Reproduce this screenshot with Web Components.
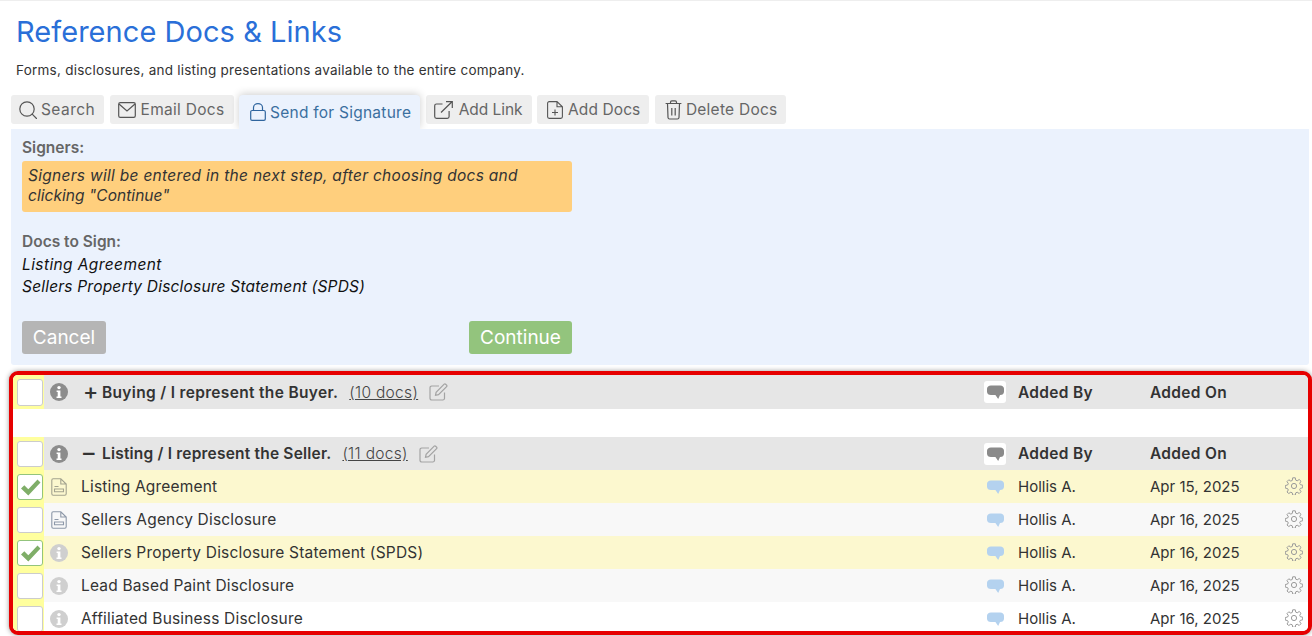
<!DOCTYPE html>
<html><head><meta charset="utf-8"><style>
html,body{margin:0;padding:0;background:#fff;height:636px;overflow:hidden}
body{font-family:Inter,"Open Sans",sans-serif;color:#333;border-top:1px solid #eee;box-sizing:border-box}
</style></head><body>
<doc-page></doc-page>
<script>
const ICONS={
search:'<svg width="18" height="18" viewBox="0 0 18 18" fill="none" stroke="currentColor" stroke-width="1.2"><circle cx="8" cy="8" r="7.2"/><path d="M13.200 13.200l4.300 4.300" stroke-linecap="round"/></svg>',
mail:'<svg width="18" height="16" viewBox="0 0 18 16" fill="none" stroke="currentColor" stroke-width="1.2"><rect x=".7" y=".7" width="16.600" height="14.600" rx="1.600"/><path d="M1 2l8 7 8-7"/></svg>',
lock:'<svg width="16" height="18" viewBox="0 0 16 18" fill="none" stroke="currentColor" stroke-width="1.2"><rect x=".7" y="7.500" width="14.600" height="9.800" rx="1.400"/><path d="M3.500 7.500V4.500a4.500 3.800 0 0 1 9 0v3"/></svg>',
link:'<svg width="19" height="18" viewBox="0 0 19 18" fill="none" stroke="currentColor" stroke-width="1.2"><path d="M8.500 3H2.500A1.800 1.800 0 0 0 .7 4.800v10.700a1.800 1.800 0 0 0 1.800 1.800h10.800a1.800 1.800 0 0 0 1.800-1.800V10"/><path d="M7 11.500L18 .8M12 .7h6.300V7"/></svg>',
add:'<svg width="16" height="18" viewBox="0 0 16 18" fill="none" stroke="currentColor" stroke-width="1.100"><path d="M10 .6H2.200A1.600 1.600 0 0 0 .6 2.200v13.600a1.600 1.600 0 0 0 1.600 1.600h11.600a1.600 1.600 0 0 0 1.600-1.600V5.800zM10 .6v5.200h5.400"/><path d="M8 8.500v6M5 11.500h6"/></svg>',
trash:'<svg width="17" height="20" viewBox="0 0 17 20" fill="none" stroke="currentColor" stroke-width="1.200"><path d="M.6 3.500h15.800M2.500 3.500l.5 14a1.600 1.600 0 0 0 1.600 1.500h7.800a1.600 1.600 0 0 0 1.600-1.500l.5-14M5.500 3.500V2.200A1.400 1.400 0 0 1 6.900.8h3.200a1.400 1.400 0 0 1 1.400 1.400v1.300M6.800 8v7.500M10.200 8v7.500"/></svg>',
info:c=>`<svg width="18" height="18" viewBox="0 0 18 18"><circle cx="9" cy="9" r="9" fill="${c}"/><circle cx="9" cy="4.600" r="1.700" fill="#fff"/><path d="M6.600 7.400h3.800v6h1.100v1.600h-5v-1.600h1.200V9H6.600z" fill="#fff"/></svg>`,
edit:'<svg width="19" height="18" viewBox="0 0 19 18" fill="none" stroke="#a3a3a3" stroke-width="1.200"><path d="M15.500 9.500v6A1.700 1.700 0 0 1 13.800 17H2.700A1.700 1.700 0 0 1 1 15.300V4.700A1.700 1.700 0 0 1 2.700 3h7.300"/><path d="M6.500 12.300l.6-3L15.200 1.200a1 1 0 0 1 1.400 0l1 1a1 1 0 0 1 0 1.400L9.500 11.700z"/></svg>',
bubble:c=>`<svg width="17" height="15" viewBox="0 0 17 15"><path d="M4 .5h9.200C15.500.5 17 1.800 17 3.800v2.900c0 2-1.500 3.300-3.800 3.300H13l-1.800 3.900L8.400 10H4C1.600 10 0 8.700 0 6.700V3.800C0 1.800 1.600.5 4 .5z" fill="${c}"/></svg>`,
doc:c=>`<svg width="16" height="18" viewBox="0 0 16 18" fill="none" stroke="${c}" stroke-width="1.100"><path d="M9.800 .8H2.200A1.500 1.500 0 0 0 .8 2.300v13.400a1.500 1.500 0 0 0 1.400 1.500h11.600a1.500 1.500 0 0 0 1.400-1.500V6zM9.800 .8V6h5"/><path d="M3.500 8.500h4M3.500 11h9v2.700h-9z"/></svg>`,
gear:'<svg width="18" height="18" viewBox="0 0 18 18" fill="none" stroke="#9a9a9a" stroke-width="1"><circle cx="9" cy="9" r="2.600"/><path d="M7.700 .8h2.600l.4 2.300 1.500.7 2-1.300 1.800 1.800-1.300 2 .7 1.400 2.300.5v2.600l-2.300.5-.7 1.400 1.300 2-1.800 1.800-2-1.300-1.500.7-.4 2.300H7.700l-.4-2.300-1.500-.7-2 1.300L2 15l1.300-2-.7-1.400-2.300-.5V8.500l2.300-.5.7-1.400L2 4.600l1.800-1.800 2 1.300 1.500-.7z" stroke-linejoin="round"/></svg>'
};
function def(name,css,html){
  customElements.define(name,class extends HTMLElement{
    connectedCallback(){
      if(this.shadowRoot)return;
      const s=this.attachShadow({mode:'open'});
      s.innerHTML=`<style>${css}</style>`+(typeof html==='function'?html(this):html);
    }
  });
}
const attr=(e,n,d='')=>e.getAttribute(n)??d;

def('page-head',`:host{display:block;padding:0 0 0 16px}
h1{margin:0;padding-top:12px;height:37px;font:400 29px/37px Inter,sans-serif;color:#2a6fd8;letter-spacing:.05px}
p{margin:0;padding-top:10px;height:20px;font:400 13.5px/20px Inter,sans-serif;color:#333;letter-spacing:.24px}`,
`<h1>Reference Docs &amp; Links</h1><p>Forms, disclosures, and listing presentations available to the entire company.</p>`);

def('tool-tab',`:host{display:inline-flex;align-items:center;gap:var(--g,4px);height:29px;padding:0 9px 0 var(--p,8px);background:#eee;color:#666;border-radius:3px;font:400 15.5px/29px Inter,sans-serif;letter-spacing:var(--ls,.43px);box-sizing:border-box}
:host([active]){height:34px;background:#ebf2fd;color:#3b6f9f;border-radius:4px 4px 0 0;box-shadow:0 -1px 8px rgba(0,0,0,.2);position:relative;z-index:1;clip-path:inset(-10px -10px 0 -10px)}
.i{display:flex;color:#555}:host([active]) .i{color:#2f659e}`,
e=>`<span class="i">${ICONS[attr(e,'icon')]}</span><slot></slot>`);

def('tab-bar',`:host{display:flex;align-items:flex-start;gap:5.500px;padding-left:11px;height:34px;margin-top:15px}`,`<slot></slot>`);

def('sign-panel',`:host{display:block;margin:0 3px 0 11px;height:236px;background:#ebf2fd;box-sizing:border-box;padding:8px 10px 0 11px;border-radius:0 0 3px 3px;font:400 15.5px/22px Inter,sans-serif}
.l{font-weight:600;color:#666;line-height:22px}
.note{width:550px;height:51px;box-sizing:border-box;margin-top:2px;padding:5px 6px 0;background:#ffcf7d;border-radius:3px;font-style:italic;line-height:20px;color:#333;letter-spacing:.29px}
.d{margin-top:19px}
.doc{font-style:italic;color:#111;letter-spacing:.2px}
.doc.a{margin-top:1px;letter-spacing:.4px}
.btns{width:550px;display:flex;justify-content:space-between;margin-top:23px}
.b{height:33px;border-radius:3px;color:#fff;font:400 19px/33px Inter,sans-serif;text-align:center}
.c{width:84px;background:#b5b5b5}.g{width:103px;background:#93c47d}`,
`<div class="l">Signers:</div><div class="note">Signers will be entered in the next step, after choosing docs and<br><span style="letter-spacing:.05px">clicking "Continue"</span></div>
<div class="l d">Docs to Sign:</div><div class="doc a">Listing Agreement</div><div class="doc">Sellers Property Disclosure Statement (SPDS)</div>
<div class="btns"><div class="b c">Cancel</div><div class="b g">Continue</div></div>`);

const cols=`.by{position:absolute;left:1005px}.on{position:absolute;left:1137px}`;

def('group-head',`:host{display:flex;align-items:center;position:relative;height:33px;background:#e6e6e6;font:600 15.5px/33px Inter,sans-serif;color:#333;letter-spacing:.3px}
:host([tall]){height:34px}
.ck{width:31px;align-self:stretch;background:#ffff9e;display:flex;align-items:center;padding-left:4px;box-sizing:border-box;flex:none}
.box{width:26px;height:26px;background:#fff;border:1px solid #ccc;border-radius:3px;box-sizing:border-box;margin-top:1px}
:host([tall]) .box{height:27px}
.info{display:flex;margin-left:6px;width:18px}
.sign{width:19px;margin-left:15px;font-size:23px;font-weight:500;letter-spacing:0}
.c{margin-left:11px;font-weight:300;color:#444;text-decoration:underline;letter-spacing:.32px}
.e{display:flex;margin-left:11px}
.bb{position:absolute;left:971px;top:6px;width:22px;height:22px;background:#fff;border-radius:3px;display:flex;align-items:center;justify-content:center}
${cols}`,
e=>`<div class="ck"><div class="box"></div></div><span class="info">${ICONS.info('#8c8c8c')}</span><span class="sign">${attr(e,'sign')}</span><span style="letter-spacing:${attr(e,'ls','.3px')}">${attr(e,'label')}</span><span class="c">(${attr(e,'count')} docs)</span><span class="e">${ICONS.edit}</span>
<span class="bb">${ICONS.bubble('#8a8a8a')}</span><span class="by">Added By</span><span class="on">Added On</span>`);

def('doc-row',`:host{display:flex;align-items:center;position:relative;height:33px;background:#fff;font:400 15.5px/33px Inter,sans-serif;color:#333;letter-spacing:.18px;flex:none}
:host([alt]){background:#f8f8f8}:host([sel]){background:#fcf8cf}
.ck{width:31px;align-self:stretch;background:#ffff9e;display:flex;align-items:center;padding-left:4px;box-sizing:border-box;flex:none}
.box{width:26px;height:26px;background:#fff;border:1px solid #ccc;border-radius:3px;box-sizing:border-box;display:flex;align-items:center;justify-content:center;margin-top:1px}
:host([sel]) .box{border-color:#93c47d}
.info{display:flex;width:18px;margin-left:6px;justify-content:center}
.t{margin-left:13px}
.bb{position:absolute;left:974px;top:10px;display:flex}
.g{position:absolute;left:1272px;top:7px;display:flex}
.by,.on{font-size:15px;letter-spacing:0}
${cols}`,
e=>`<div class="ck"><div class="box">${e.hasAttribute('sel')?'<svg width="21" height="19" viewBox="0 0 21 19"><path d="M1 10.500l3.300-3.300 4 4L17.500 1.500 20.500 4.500 8.300 17.500z" fill="#7fae68"/></svg>':''}</div></div>
<span class="info">${attr(e,'kind')==='doc'?ICONS.doc(e.hasAttribute('sel')?'#a3a38f':'#8d98a8'):ICONS.info('#cfcfcf')}</span><span class="t"><slot></slot></span>
<span class="bb">${ICONS.bubble('#b4d2ef')}</span><span class="by">Hollis A.</span><span class="on">${attr(e,'date')}</span><span class="g">${ICONS.gear}</span>`);

def('doc-table',`:host{display:block;margin:6px 0 0 9px;height:264px;box-sizing:border-box;border:4px solid #e60000;border-radius:9px;overflow:hidden;background:#fff;box-shadow:0 0 5px rgba(0,0,0,.4)}
.gap{height:28px}`,
`<group-head sign="+" label="Buying / I represent the Buyer." ls=".33px" count="10" tall></group-head><div class="gap"></div>
<group-head sign="–" label="Listing / I represent the Seller." ls=".2px" count="11"></group-head>
<doc-row sel kind="doc" date="Apr 15, 2025">Listing Agreement</doc-row>
<doc-row alt kind="doc" date="Apr 16, 2025">Sellers Agency Disclosure</doc-row>
<doc-row sel date="Apr 16, 2025">Sellers Property Disclosure Statement (SPDS)</doc-row>
<doc-row alt date="Apr 16, 2025">Lead Based Paint Disclosure</doc-row>
<doc-row date="Apr 16, 2025">Affiliated Business Disclosure</doc-row>`);

def('doc-page',`:host{display:block}`,
`<page-head></page-head>
<tab-bar><tool-tab icon="search">Search</tool-tab><tool-tab icon="mail" style="--g:5px;--ls:.3px">Email Docs</tool-tab><tool-tab icon="lock" active style="--p:11px;--g:4px;--ls:.25px">Send for Signature</tool-tab><tool-tab icon="link" style="--g:6px;--ls:-.05px">Add Link</tool-tab><tool-tab icon="add" style="--p:10px;--g:5px;--ls:.1px">Add Docs</tool-tab><tool-tab icon="trash" style="--p:10px;--ls:.25px">Delete Docs</tool-tab></tab-bar>
<sign-panel></sign-panel><doc-table></doc-table>`);
</script></body></html>
